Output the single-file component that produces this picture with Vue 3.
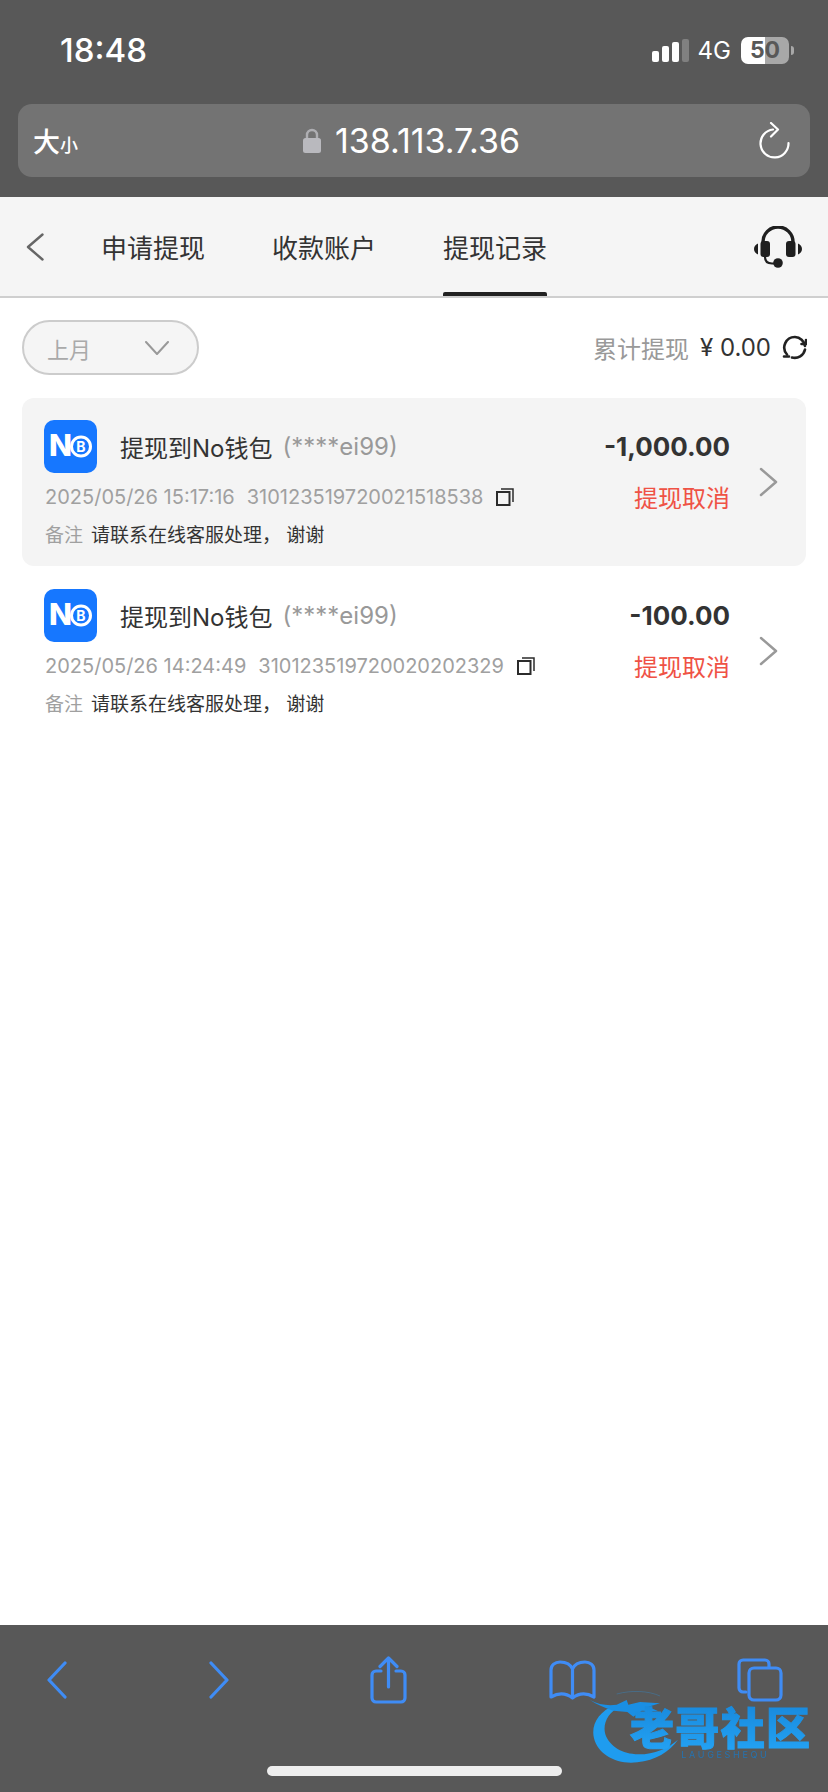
<template>
  <div class="page">
    <!-- 浏览器顶栏 -->
    <header class="browser-top">
      <div class="status">
        <span class="time">18:48</span>
        <div class="status-right">
          <div class="signal">
            <i v-for="(h, i) in signalBars" :key="i" :class="{ off: i === 3 }" :style="{ height: h + 'px' }"></i>
          </div>
          <span class="net">4G</span>
          <div class="battery"><span>50</span></div>
          <i class="battery-cap"></i>
        </div>
      </div>
      <div class="urlbar">
        <div class="font-size">大<small>小</small></div>
        <div class="address">
          <svg class="lock" width="18" height="25" viewBox="0 0 18 25">
            <path d="M4 11V7a5 5 0 0 1 10 0v4" fill="none" stroke="#aeaeb2" stroke-width="2.4" />
            <rect y="10" width="18" height="15" rx="2.5" fill="#b9b9be" />
          </svg>
          <span>138.113.7.36</span>
        </div>
        <svg class="reload" width="32" height="37" viewBox="0 0 32 37" fill="none" stroke="#fff" stroke-width="2.2" stroke-linecap="round" stroke-linejoin="round">
          <path d="M15 7.5A14 14 0 1 0 30.5 21" />
          <path d="M13 1l7 6.5-7 7" />
        </svg>
      </div>
    </header>

    <!-- 页签 -->
    <nav class="tabs">
      <svg class="nav-back" width="18" height="28" viewBox="0 0 18 28" fill="none" stroke="#666" stroke-width="2.4" stroke-linecap="round" stroke-linejoin="round">
        <path d="M16.5 1.5 2 14l14.500 12.500" />
      </svg>
      <div class="tab-list">
        <a v-for="t in tabs" :key="t" class="tab" :class="{ active: t === current }">{{ t }}</a>
      </div>
      <svg class="service" width="48" height="42" viewBox="0 0 48 42">
        <path d="M9 20v-4a15 15 0 0 1 30 0v4" fill="none" stroke="#1f1f1f" stroke-width="3.400" />
        <rect x="6.500" y="15" width="9.500" height="16" rx="3" fill="#1f1f1f" />
        <rect x="32" y="15" width="9.500" height="16" rx="3" fill="#1f1f1f" />
        <path d="M4 17.500c-2.500 1-4 3-4 5.500s1.500 4.500 4 5.500zM44 17.500c2.500 1 4 3 4 5.500s-1.500 4.500-4 5.500z" fill="#1f1f1f" />
        <path d="M11 31c0 4 2.500 6.500 7 6.500h5" fill="none" stroke="#1f1f1f" stroke-width="2.200" />
        <circle cx="24" cy="37" r="4.800" fill="#1f1f1f" />
      </svg>
    </nav>

    <main class="content">
      <div class="filter-row">
        <div class="month-picker">
          <span>上月</span>
          <svg width="24" height="14" viewBox="0 0 24 14" fill="none" stroke="#999" stroke-width="2" stroke-linecap="round" stroke-linejoin="round">
            <path d="M1 1l11 12L23 1" />
          </svg>
        </div>
        <div class="total">
          <span class="total-label">累计提现</span>
          <span class="total-value">¥ 0.00</span>
          <svg width="25" height="25" viewBox="0 0 25 25" fill="none" stroke="#222" stroke-width="2.600" stroke-linecap="round" stroke-linejoin="round">
            <path d="M5 19.500A10.500 10.500 0 0 1 13 2a10.500 10.500 0 0 1 10 9" />
            <path d="M23 14.500A10.500 10.500 0 0 1 10 22.500" />
            <path d="M7 21.500H2M19.500 9h4.500V5" />
          </svg>
        </div>
      </div>

      <ul class="records">
        <li v-for="(r, i) in records" :key="r.order" class="record" :class="{ hl: i === 0 }">
          <div class="record-main">
            <div class="record-title">
              <svg class="wallet" width="53" height="53" viewBox="0 0 53 53">
                <rect width="53" height="53" rx="10" fill="#1677ff" />
                <text x="5" y="36" class="wallet-n">N</text>
                <circle cx="37" cy="26.500" r="9.500" fill="none" stroke="#fff" stroke-width="3" />
                <text x="37" y="31.500" class="wallet-b">B</text>
              </svg>
              <span class="title-text">提现到No钱包</span>
              <span class="account">(****ei99)</span>
            </div>
            <div class="record-meta">
              <span>{{ r.time }}</span>
              <span class="order">{{ r.order }}</span>
              <svg class="copy" width="18" height="18" viewBox="0 0 18 18" fill="none" stroke="#2b2b2b">
                <rect x="1" y="4" width="12.500" height="13" stroke-width="2" />
                <path d="M5 1h12v13" stroke-width="1.500" />
              </svg>
            </div>
            <div class="record-note">
              <span class="note-label">备注</span>
              <span>请联系在线客服处理， 谢谢</span>
            </div>
          </div>
          <div class="record-side">
            <div class="amount">{{ r.amount }}</div>
            <div class="state">提现取消</div>
          </div>
          <svg class="arrow" width="19" height="30" viewBox="0 0 19 30" fill="none" stroke="#999" stroke-width="2.500" stroke-linecap="round" stroke-linejoin="round">
            <path d="M2 2l15 13L2 28" />
          </svg>
        </li>
      </ul>
    </main>

    <!-- 浏览器底栏 -->
    <footer class="browser-bottom">
      <div class="tools">
        <svg width="20" height="38" viewBox="0 0 20 38"><path d="M18 2 2 19l16 17" /></svg>
        <svg width="20" height="38" viewBox="0 0 20 38"><path d="M2 2l16 17L2 36" /></svg>
        <svg width="37" height="48" viewBox="0 0 37 48">
          <path d="M11 15H6a4 4 0 0 0-4 4v23a4 4 0 0 0 4 4h25a4 4 0 0 0 4-4V19a4 4 0 0 0-4-4h-5" />
          <path d="M18.500 31V2M10 10.500 18.500 2 27 10.500" />
        </svg>
        <svg width="47" height="40" viewBox="0 0 47 40">
          <path d="M23.500 9C21 3 16 2 11 2 6 2 2 5 2 10v27c7-4 15-4 21.500 1 6.500-5 14.500-5 21.500-1V10c0-5-4-8-9-8-5 0-10 1-12.500 7zM23.500 9v29" />
        </svg>
        <svg width="46" height="44" viewBox="0 0 46 44">
          <path d="M9 34H6a4 4 0 0 1-4-4V6a4 4 0 0 1 4-4h22a4 4 0 0 1 4 4v3" />
          <rect x="12" y="10" width="32" height="32" rx="5" />
        </svg>
      </div>
      <div class="home-bar"></div>

      <!-- 右下角社区水印 -->
      <svg class="mark" width="258" height="112" viewBox="0 0 774 336">
        <defs>
          <linearGradient id="markFill" x1="0" y1="0" x2="0" y2="1">
            <stop offset="0" stop-color="#1684d8" />
            <stop offset="1" stop-color="#25a6f7" />
          </linearGradient>
        </defs>
        <path d="M135 75C85 95 62 135 72 175c12 50 70 80 130 72 55-7 95-30 122-68-30 26-70 44-118 44-50 0-88-25-100-60-9-32 8-65 45-85z" fill="#1f9cef" />
        <path d="M60 60c25 14 55 18 80 14l30-14 5 14 35-8 60 4-35 10 30 14-50-2-25 18-18-14-42-4c-25-8-50-18-70-32z" fill="#1a8fe4" />
        <path d="M140 42c45-12 95-10 130 6" fill="none" stroke="#3a7fb4" stroke-width="3" opacity=".5" />
        <text x="180" y="196" class="mark-title" fill="url(#markFill)" stroke="url(#markFill)">老哥社区</text>
        <text x="334" y="235" class="mark-sub">LAUGESHEQU</text>
      </svg>
    </footer>
  </div>
</template>

<script setup>
const signalBars = [11, 16, 20, 23]
const tabs = ['申请提现', '收款账户', '提现记录']
const current = '提现记录'

const records = [
  { time: '2025/05/26 15:17:16', order: '310123519720021518538', amount: '-1,000.00' },
  { time: '2025/05/26 14:24:49', order: '310123519720020202329', amount: '-100.00' },
]
</script>

<style>
html,
body {
  margin: 0;
  background: #fff;
}
</style>

<style scoped>
.page {
  display: flex;
  flex-direction: column;
  width: 828px;
  height: 1792px;
  overflow: hidden;
  font-family: Inter, "Noto Sans CJK SC", sans-serif;
  color: #333;
}

.browser-top {
  flex: none;
  height: 197px;
  background: #585858;
}

.status {
  display: flex;
  align-items: center;
  justify-content: space-between;
  height: 100px;
  padding: 0 34px 0 60px;
}

.time {
  font-size: 33px;
  font-weight: 500;
  color: #fff;
}

.status-right {
  display: flex;
  align-items: center;
}

.signal {
  display: flex;
  align-items: flex-end;
  gap: 3px;
  height: 23px;
  margin-right: 9px;
}

.signal i {
  display: block;
  width: 7px;
  border-radius: 2px;
  background: #fff;
}

.signal i.off {
  background: #808080;
}

.net {
  font-size: 24px;
  color: #fff;
  margin-right: 10px;
}

.battery {
  width: 48px;
  height: 27px;
  border-radius: 7px;
  background: linear-gradient(90deg, #fff 50%, #a8a8a8 50%);
  display: flex;
  align-items: center;
  justify-content: center;
  font-size: 23px;
  font-weight: 700;
  color: #585858;
}

.battery-cap {
  display: block;
  width: 3px;
  height: 9px;
  margin-left: 2px;
  border-radius: 0 3px 3px 0;
  background: #a8a8a8;
}

.urlbar {
  display: grid;
  grid-template-columns: 1fr auto 1fr;
  align-items: center;
  height: 73px;
  margin: 4px 18px 0;
  padding: 0 20px 0 15px;
  border-radius: 14px;
  background: #737373;
}

.font-size {
  font-size: 27px;
  font-weight: 500;
  color: #fff;
}

.font-size small {
  font-size: 18px;
}

.address {
  display: flex;
  align-items: center;
  gap: 14px;
  font-size: 34px;
  color: #fff;
}

.reload {
  justify-self: end;
}

.tabs {
  flex: none;
  display: flex;
  align-items: center;
  height: 101px;
  padding: 0 26px;
  background: #f5f5f5;
  border-bottom: 2px solid #cfcfcf;
  box-sizing: border-box;
}

.tab-list {
  display: flex;
  gap: 67px;
  align-self: stretch;
  margin-left: 57px;
  flex: 1;
}

.tab {
  display: flex;
  align-items: center;
  position: relative;
  font-size: 26px;
  color: #333;
}

.tab.active::after {
  content: "";
  position: absolute;
  left: 0;
  right: 0;
  bottom: 0;
  height: 4px;
  border-radius: 2px 2px 0 0;
  background: #222;
}

.content {
  flex: 1;
  background: #fff;
}

.filter-row {
  display: flex;
  align-items: center;
  justify-content: space-between;
  padding: 22px 21px 23px 22px;
}

.month-picker {
  display: flex;
  align-items: center;
  justify-content: space-between;
  box-sizing: border-box;
  width: 177px;
  height: 55px;
  padding: 0 28px 0 23px;
  border: 2px solid #ccc;
  border-radius: 28px;
  background: #f5f5f5;
  font-size: 22px;
  color: #aaa;
}

.total {
  display: flex;
  align-items: center;
  font-size: 24px;
}

.total-label {
  color: #999;
  margin-right: 11px;
}

.total-value {
  color: #333;
  margin-right: 11px;
}

.records {
  list-style: none;
  margin: 0;
  padding: 0 22px;
}

.record {
  display: flex;
  align-items: center;
  box-sizing: border-box;
  height: 168px;
  margin-bottom: 1px;
  padding: 22px 28px 23px 22px;
  border-radius: 12px;
}

.record.hl {
  background: #f4f4f4;
}

.record-main {
  flex: 1;
  align-self: flex-start;
}

.record-title {
  display: flex;
  align-items: center;
  height: 53px;
  font-size: 24px;
}

.wallet {
  margin-right: 23px;
}

.wallet-n {
  font-family: Inter, sans-serif;
  font-size: 30px;
  font-weight: 800;
  fill: #fff;
}

.wallet-b {
  font-family: Inter, sans-serif;
  font-size: 14px;
  font-weight: 700;
  text-anchor: middle;
  fill: #fff;
}

.title-text {
  color: #333;
}

.account {
  margin-left: 10px;
  color: #999;
}

.record-meta {
  display: flex;
  align-items: center;
  height: 20px;
  margin-top: 14px;
  padding-left: 1px;
  font-size: 20px;
  color: #a0a0a0;
}

.order {
  margin-left: 12px;
}

.copy {
  margin-left: 13px;
}

.record-note {
  display: flex;
  align-items: center;
  height: 20px;
  margin-top: 16px;
  padding-left: 1px;
  font-size: 19px;
  color: #333;
}

.note-label {
  margin-right: 8px;
  color: #a0a0a0;
}

.record-side {
  align-self: flex-start;
  text-align: right;
}

.amount {
  height: 53px;
  line-height: 53px;
  font-size: 26px;
  font-weight: 700;
  color: #333;
}

.state {
  margin-top: 11px;
  line-height: 30px;
  font-size: 24px;
  color: #ef5245;
}

.arrow {
  margin-left: 29px;
}

.browser-bottom {
  flex: none;
  position: relative;
  height: 167px;
  background: #585858;
}

.tools {
  position: relative;
  display: flex;
  justify-content: space-between;
  align-items: center;
  padding: 30px 45px 0 47px;
  height: 50px;
}

.tools svg {
  fill: none;
  stroke: #3f8cf5;
  stroke-width: 3.200;
  stroke-linecap: round;
  stroke-linejoin: round;
}

.home-bar {
  width: 295px;
  height: 10px;
  margin: 61px auto 0 267px;
  border-radius: 5px;
  background: #eee;
}

.mark {
  position: absolute;
  left: 570px;
  top: 55px;
  filter: blur(0.6px);
}

.mark-title {
  font-family: "Noto Sans CJK SC", sans-serif;
  font-size: 132px;
  font-weight: 900;
  stroke-width: 3;
  letter-spacing: 4px;
}

.mark-sub {
  font-family: Inter, sans-serif;
  font-size: 27px;
  letter-spacing: 8px;
  fill: #2573b0;
}
</style>
